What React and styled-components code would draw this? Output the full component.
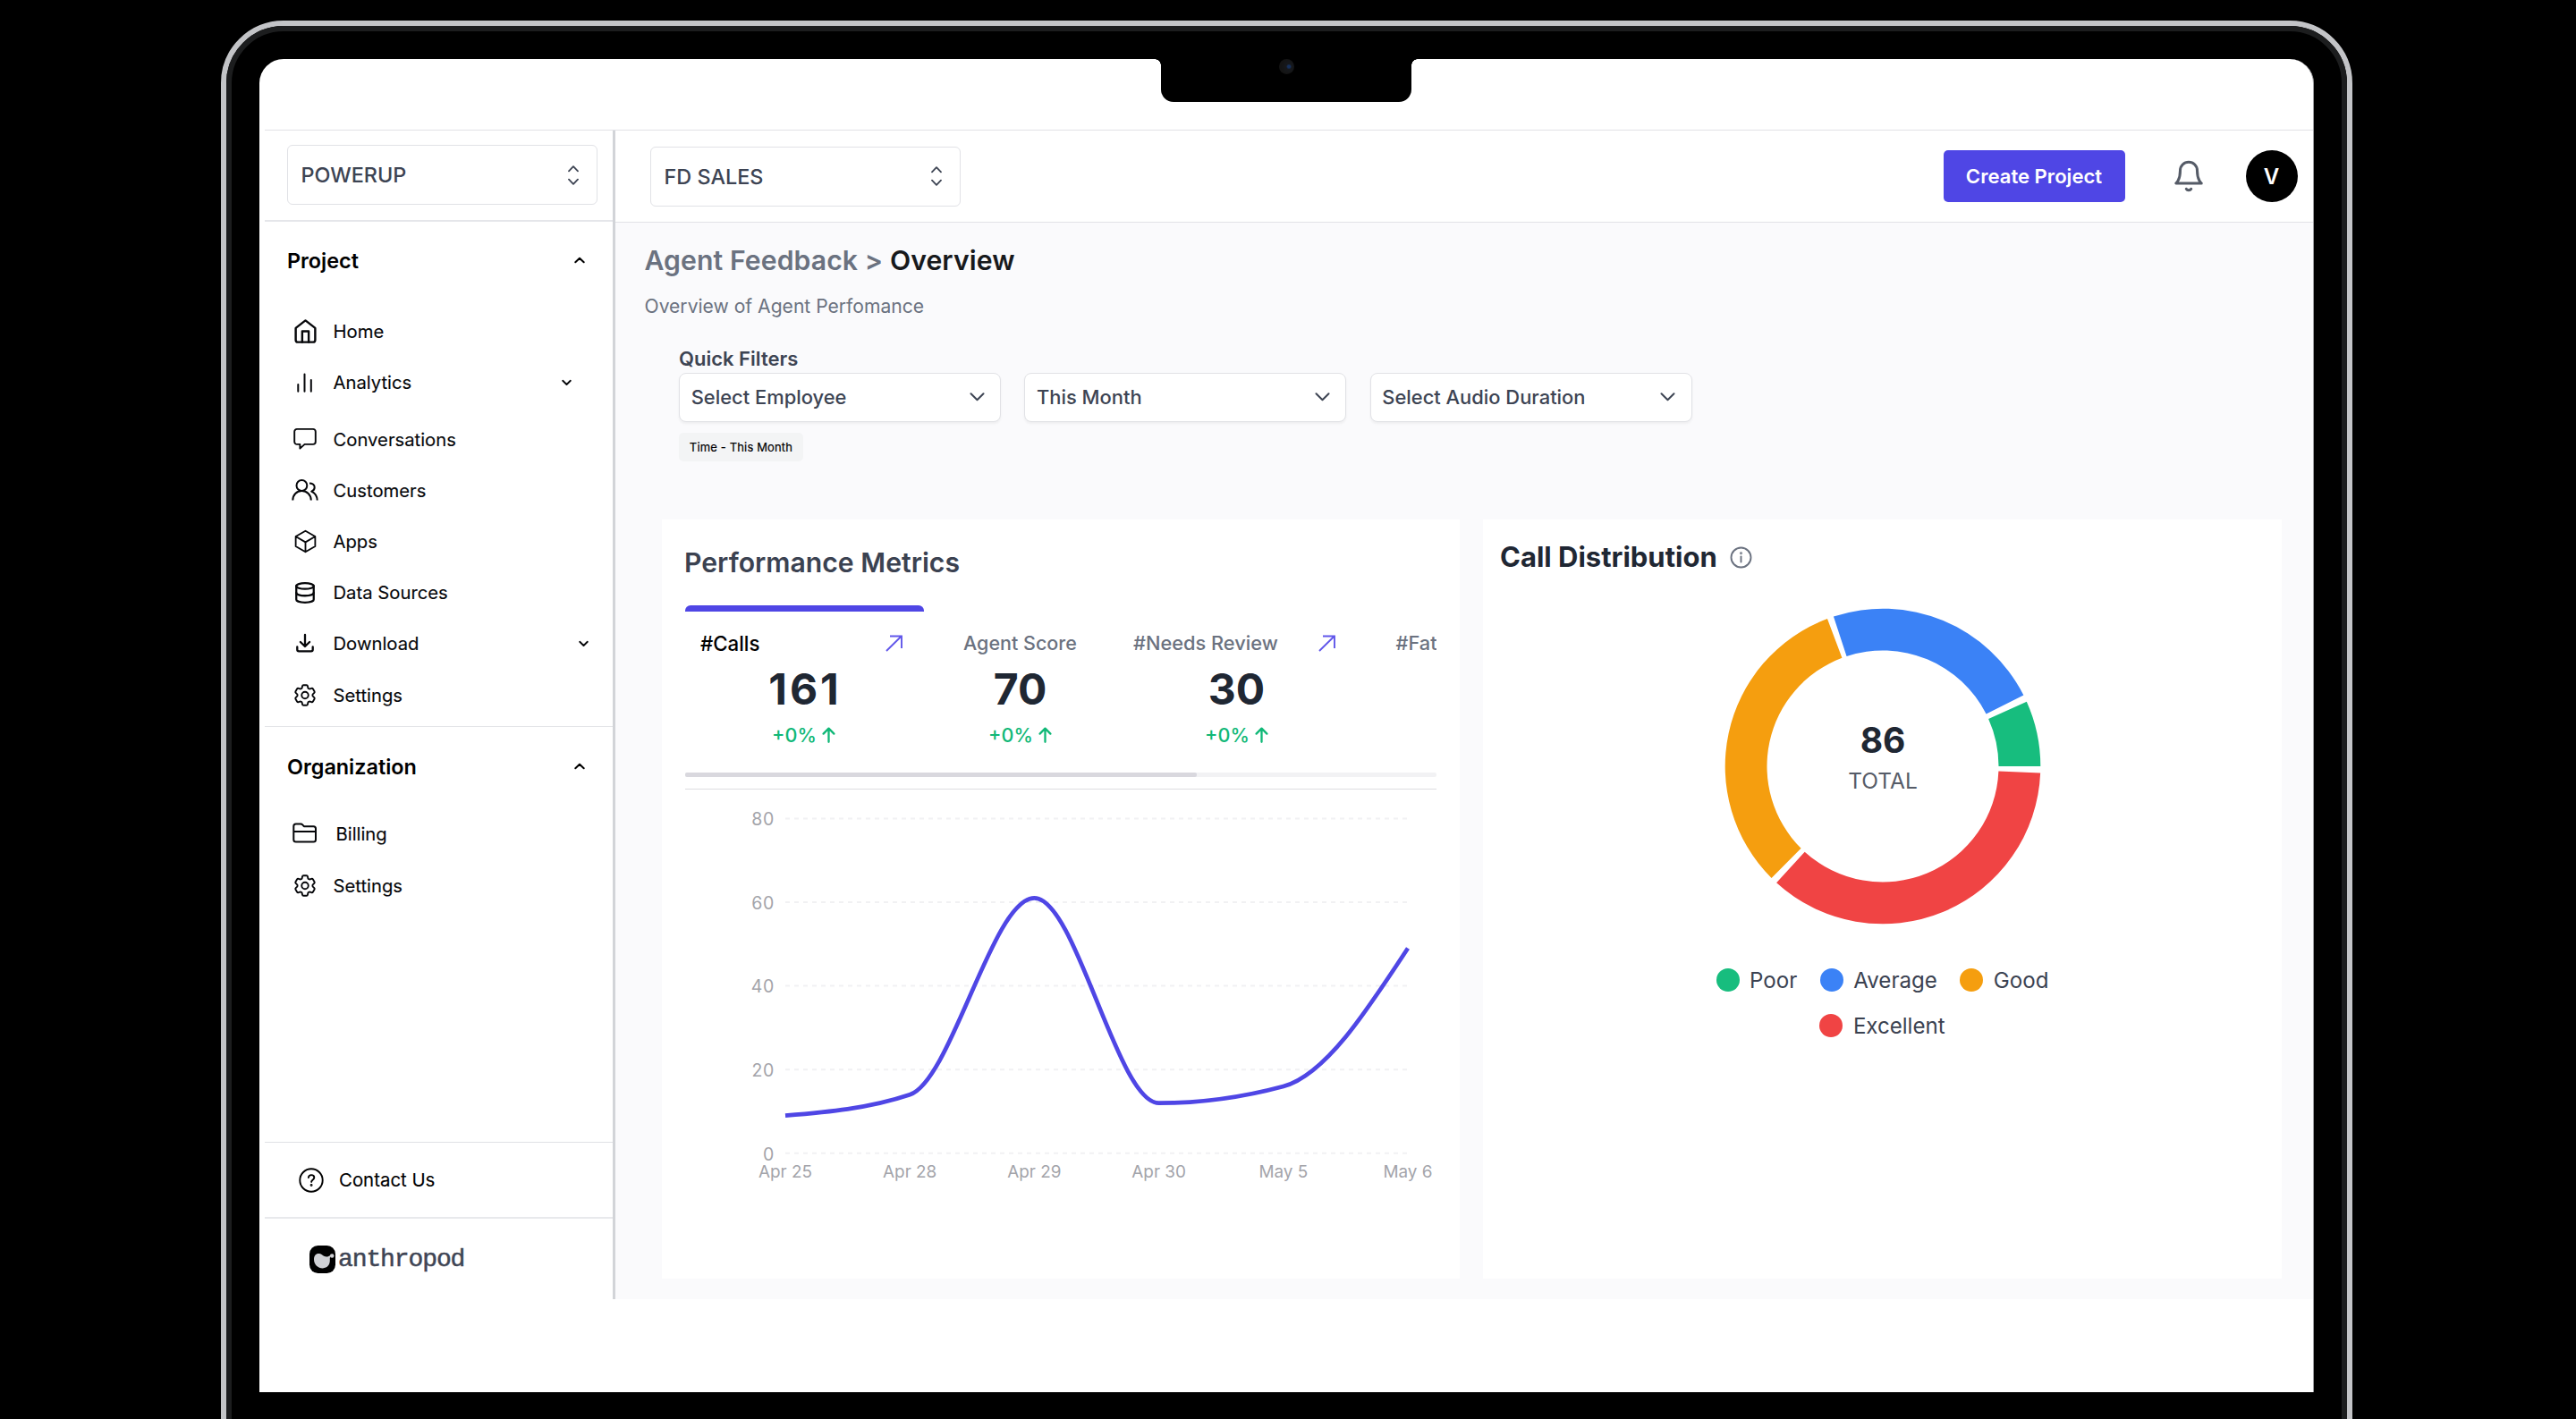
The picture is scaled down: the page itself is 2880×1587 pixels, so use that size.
import React from 'react';
import styled, { createGlobalStyle } from 'styled-components';
import { FiHome, FiBell, FiDatabase } from 'react-icons/fi';
import { HiOutlineCube, HiOutlineCog6Tooth } from 'react-icons/hi2';

const GlobalStyle = createGlobalStyle`
  * { box-sizing: border-box; }
  body { margin: 0; background: #000; }
  button { font: inherit; border: 0; }
`;

const Stage = styled.div`
  width: 2880px;
  height: 1587px;
  padding: 23px 0 0 247px;
  overflow: hidden;
  background: #000;
  font-family: Inter, 'Liberation Sans', sans-serif;
  color: #000;
`;

/* ---------- laptop ---------- */
const Lid = styled.div`
  width: 2383px;
  height: 1700px;
  border: 6px solid #c3c4c7;
  border-radius: 70px;
`;
const Bezel = styled.div`
  height: 100%;
  border: 6px solid #1c1d1e;
  border-radius: 64px;
  padding: 31px;
  background: #000;
`;
const Screen = styled.div`
  position: relative;
  height: 1491px;
  padding: 79px 0 0 6px;
  border-right: 1px solid #9a9a9d;
  border-radius: 27px 27px 0 0;
  background: #fff;
`;
const Notch = styled.div`
  position: absolute;
  top: 0;
  left: 1008px;
  width: 280px;
  height: 48px;
  background: #000;
  border-radius: 0 0 14px 14px;
  display: flex;
  justify-content: center;
  &::before, &::after {
    content: '';
    position: absolute;
    top: 0;
    width: 7px;
    height: 7px;
  }
  &::before { left: -7px; background: radial-gradient(circle at 0 100%, transparent 6.5px, #000 7px); }
  &::after { right: -7px; background: radial-gradient(circle at 100% 100%, transparent 6.5px, #000 7px); }
`;
const Camera = styled.div`
  width: 17px;
  height: 17px;
  border-radius: 50%;
  background: radial-gradient(circle at 65% 50%, #16305c 0 1.5px, #16181c 3px, #141414 9px);
`;

/* ---------- shell ---------- */
const Shell = styled.div`
  display: flex;
  height: 1308px;
  border-top: 1px solid #e1e2e6;
`;
const Sidebar = styled.aside`
  width: 392px;
  flex: none;
  display: flex;
  flex-direction: column;
  border-right: 3px solid #d2d4d8;
`;
const SwitcherArea = styled.div`
  height: 102px;
  padding: 16px 17px 0 25px;
  border-bottom: 2px solid #e5e6ea;
`;
const Switcher = styled.div`
  width: 347px;
  height: 67px;
  padding: 0 20px 0 14.5px;
  display: flex;
  align-items: center;
  justify-content: space-between;
  border: 1px solid #e1e2e6;
  border-radius: 6px;
  background: #fff;
  color: #3d4453;
  font-size: 23.4px;
  font-weight: 500;
`;
const Section = styled.section`
  padding-bottom: 6px;
  border-bottom: ${(p) => (p.$last ? 0 : 1)}px solid #e4e5e8;
`;
const SectionHead = styled.div`
  height: ${(p) => p.$h}px;
  margin-bottom: ${(p) => p.$gap}px;
  padding: 0 31.5px 0 25px;
  display: flex;
  align-items: center;
  justify-content: space-between;
  font-size: 23.4px;
  font-weight: 600;
`;
const NavItem = styled.a`
  height: ${(p) => p.$h || 57.2}px;
  margin-bottom: ${(p) => p.$after || 0}px;
  padding: 0 ${(p) => p.$end || 0}px 0 30px;
  display: flex;
  align-items: center;
  gap: 16.5px;
  font-size: 20.25px;
  color: #06070a;
  -webkit-text-stroke: 0.12px currentColor;
`;
const IconCell = styled.span`
  width: 30px;
  height: 30px;
  flex: none;
  display: flex;
  align-items: center;
  justify-content: center;
`;
const NavLabel = styled.span`
  flex: 1;
  padding-left: ${(p) => p.$indent || 0}px;
`;
const Spacer = styled.div`flex: 1;`;
const ContactRow = styled.div`
  height: 84px;
  padding-left: 37px;
  display: flex;
  align-items: center;
  gap: 16px;
  border-top: 1px solid #e0e1e5;
  font-size: 20.4px;
  -webkit-text-stroke: 0.12px currentColor;
`;
const BrandRow = styled.div`
  height: 92px;
  padding-left: 50px;
  display: flex;
  align-items: center;
  gap: 3px;
  border-top: 2px solid #e8e9ec;
  color: #3f4554;
  font-family: 'Liberation Mono', monospace;
  font-size: 28px;
  letter-spacing: -1.1px;
  -webkit-text-stroke: 0.5px currentColor;
`;

/* ---------- main ---------- */
const Main = styled.main`
  flex: 1;
  display: flex;
  flex-direction: column;
  background: #fafafc;
`;
const TopBar = styled.header`
  height: 103px;
  padding: 0 17.5px 0 39px;
  display: flex;
  align-items: center;
  border-bottom: 1px solid #e1e2e6;
  background: #fff;
`;
const CreateButton = styled.button`
  width: 203px;
  height: 58px;
  margin-left: auto;
  padding: 0;
  border-radius: 5px;
  background: #4f46e5;
  color: #fff;
  font-size: 22.1px;
  font-weight: 600;
`;
const BellSlot = styled.span`
  width: 39px;
  margin: 0 44px 0 52px;
  display: flex;
  color: #555b67;
`;
const Avatar = styled.div`
  width: 58px;
  height: 58px;
  border-radius: 50%;
  background: #000;
  color: #fff;
  display: flex;
  align-items: center;
  justify-content: center;
  font-size: 24px;
  font-weight: 600;
`;
const Content = styled.div`
  padding: 22px 35px 0 32.5px;
`;
const Title = styled.h1`
  margin: 0;
  font-size: 30.2px;
  line-height: 40px;
  letter-spacing: 0.08px;
  font-weight: 600;
  color: #6b7280;
  b { font-weight: 600; color: #17191c; }
`;
const Subtitle = styled.p`
  margin: 17px 0 28px;
  font-size: 21.1px;
  line-height: 30px;
  color: #6b7280;
`;
const Filters = styled.div`
  padding-left: 38.5px;
`;
const FiltersLabel = styled.div`
  font-size: 22px;
  line-height: 30px;
  font-weight: 600;
  color: #3d4453;
`;
const FilterRow = styled.div`
  display: flex;
  gap: 26.3px;
  margin-top: 1px;
`;
const FilterSelect = styled.div`
  width: 360px;
  height: 55px;
  padding: 0 17.5px 1px 12.7px;
  display: flex;
  align-items: center;
  justify-content: space-between;
  border: 1px solid #e1e2e6;
  border-radius: 8px;
  background: #fff;
  box-shadow: 0 2px 3px rgba(0, 0, 0, 0.05);
  font-size: 21.9px;
  font-weight: 500;
  color: #3d4453;
`;
const Chip = styled.span`
  display: flex;
  align-items: center;
  justify-content: center;
  width: 139px;
  height: 32px;
  margin-top: 12px;
  border-radius: 5px;
  background: #f3f4f5;
  font-size: 13px;
  letter-spacing: 0.15px;
  -webkit-text-stroke: 0.2px currentColor;
`;
const Cards = styled.div`
  display: grid;
  grid-template-columns: 891.5px 893px;
  column-gap: 26.5px;
  margin: 65px 0 0 19.5px;
`;
const Card = styled.section`
  height: 849px;
  padding: ${(p) => p.$pad};
  background: #fff;
`;
const CardTitle = styled.h2`
  margin: 0 0 0 ${(p) => p.$nudge || 0}px;
  display: flex;
  align-items: center;
  gap: 14px;
  font-size: ${(p) => p.$size}px;
  font-weight: ${(p) => p.$weight};
  line-height: 40px;
  color: ${(p) => p.$color};
`;

/* ---------- metric tabs ---------- */
const TabStrip = styled.div`
  width: 840px;
  height: 187px;
  margin-top: 28px;
  display: flex;
  overflow: hidden;
`;
const Tab = styled.div`
  width: ${(p) => p.$w}px;
  flex: none;
  display: flex;
  flex-direction: column;
  align-items: center;
`;
const TabMarker = styled.div`
  width: 100%;
  height: 7px;
  margin-bottom: 20px;
  border-radius: 6px 6px 0 0;
  background: ${(p) => (p.$on ? '#4f46e5' : 'transparent')};
`;
const TabHead = styled.div`
  width: 100%;
  height: 30px;
  padding: ${(p) => p.$pad};
  display: flex;
  align-items: center;
  justify-content: space-between;
  white-space: nowrap;
  font-size: ${(p) => p.$size || 21.8}px;
  font-weight: 500;
  color: ${(p) => (p.$on ? '#000' : '#6b7280')};
`;
const TabValue = styled.div`
  margin: 9px ${(p) => -(p.$track || 0) + 2}px 0 0;
  line-height: 56px;
  font-size: 48px;
  font-weight: 700;
  letter-spacing: ${(p) => p.$track || 0}px;
  color: #1f2733;
`;
const Delta = styled.div`
  margin: 8px 2px 0 0;
  display: flex;
  align-items: center;
  gap: 6px;
  line-height: 30px;
  font-size: 21.6px;
  font-weight: 500;
  color: #10b877;
`;
const ScrollTrack = styled.div`
  width: 840px;
  height: 5px;
  border-radius: 2px;
  background: #f2f2f4;
`;
const ScrollThumb = styled.div`
  width: 572px;
  height: 5px;
  border-radius: 2px;
  background: #d9d8de;
`;
const Rule = styled.div`
  width: 840px;
  height: 1px;
  margin-top: 13px;
  background: #dcdde1;
`;
const Plot = styled.svg`display: block;`;
const DonutWrap = styled.div`
  display: flex;
  justify-content: center;
  margin-top: 34px;
`;
const Legend = styled.div`
  width: 420px;
  margin: 42px auto 0;
  display: flex;
  flex-wrap: wrap;
  justify-content: center;
  gap: 17px 25.5px;
`;
const LegendItem = styled.div`
  display: flex;
  align-items: center;
  gap: 11.5px;
  height: 34px;
  font-size: 24.1px;
  color: #3b4251;
  &::before {
    content: '';
    width: 26px;
    height: 26px;
    border-radius: 50%;
    background: ${(p) => p.$color};
  }
`;

/* ---------- icons ---------- */
const Glyph = styled.svg`flex: none;`;
const Stroke = ({ w, h, sw = 2, color = 'currentColor', cap = 'round', children }) => (
  <Glyph width={w} height={h} viewBox={`0 0 ${w} ${h}`} fill="none" stroke={color} strokeWidth={sw} strokeLinecap={cap} strokeLinejoin="round">
    {children}
  </Glyph>
);
const UpDown = () => <Stroke w={12} h={22} sw={1.8}><path d="M1 6.3 6 1.2l5 5.1M1 15.7l5 5.1 5-5.1" /></Stroke>;
const ChevronUp = () => <Stroke w={12} h={8}><path d="M1.3 6.3 6 1.7l4.7 4.6" /></Stroke>;
const ChevronSmall = () => <Stroke w={11} h={8} sw={1.9}><path d="M1.2 1.8 5.5 6l4.3-4.2" /></Stroke>;
const ChevronSelect = () => <Stroke w={17} h={10}><path d="M1.5 1.3l7 7 7-7" /></Stroke>;
const BarsIcon = () => <Stroke w={30} h={30} sw={2}><path d="M7.3 17v7.800M14.500 5.500v19.300M21.800 12v12.800" /></Stroke>;
const ChatIcon = () => (
  <Stroke w={30} h={30} sw={1.9}>
    <path d="M6 3.9h18a2.8 2.8 0 0 1 2.8 2.8v11.4a2.8 2.8 0 0 1-2.8 2.8H14.600L9.400 25.600v-4.700H6a2.800 2.800 0 0 1-2.800-2.800V6.700A2.800 2.800 0 0 1 6 3.900Z" />
  </Stroke>
);
const PeopleIcon = () => (
  <Stroke w={30} h={26} sw={2} cap="butt">
    <circle cx="11.4" cy="8" r="5.9" />
    <path d="M1.300 24.500c0-6 4.400-10.500 10.100-10.500s10.400 4.500 10.400 10.500M20 5.400c3 0 5.700 1.500 5.700 4.500 0 2.400-1.500 4-3.500 4.700 3.800 1.700 6.300 5 6.500 9.900" />
  </Stroke>
);
const DownloadIcon = () => (
  <Stroke w={30} h={30} sw={2.3}>
    <path d="M15 5v12.500M9.900 13l5.100 5 5.100-5M6.300 18.500v3a1.800 1.800 0 0 0 1.800 1.800h13.800a1.800 1.800 0 0 0 1.800-1.800v-3" />
  </Stroke>
);
const FolderIcon = () => (
  <Stroke w={30} h={26} sw={2}>
    <path d="M2.300 20V5a2.500 2.500 0 0 1 2.500-2.500h5.400c.8 0 1.500.3 2 .9l1.600 1.800h10.700A2.500 2.500 0 0 1 27 7.700V20a2.500 2.500 0 0 1-2.500 2.500H4.800A2.500 2.500 0 0 1 2.300 20ZM2.300 11H27" />
  </Stroke>
);
const HelpIcon = () => (
  <Stroke w={30} h={30} sw={1.9}>
    <circle cx="15" cy="15" r="12.7" />
    <path d="M11.900 12c.2-1.800 1.500-2.900 3.200-2.900s3.200 1.100 3.200 2.800c0 2.500-3.100 2.500-3.200 5" />
    <circle cx="15.1" cy="20.5" r=".5" fill="currentColor" />
  </Stroke>
);
const InfoIcon = () => (
  <Stroke w={25} h={25} sw={1.9} color="#6b7280">
    <circle cx="12.5" cy="12.5" r="11" />
    <path d="M12.500 11.500v6" />
    <circle cx="12.5" cy="7.8" r=".5" />
  </Stroke>
);
const OpenIcon = () => <Stroke w={19} h={19} sw={1.9} color="#6157ea" cap="butt"><path d="M1 18 17.800 1.500M5 1.500h13V15" strokeLinejoin="miter" /></Stroke>;
const RiseIcon = () => <Stroke w={15} h={18} sw={2.3}><path d="M7.500 16.800V1.800M1.600 7.600l5.900-6 5.900 6" /></Stroke>;
const LogoMark = () => (
  <svg width="29" height="31" viewBox="0 0 29 31">
    <rect width="29" height="31" rx="9.5" fill="#000" />
    <path d="M5 15.500c0-4.500 2.500-7 6-6.500 3.200.5 4.500 3.500 8 3.500 1.500 0 2.500-.6 3.600-1.300l1 1.400c-.8.800-.9 1.500-.8 3 .4 5.800-2.800 9.800-8 9.800S5 21.500 5 15.500Z" fill="#d0d1d5" />
    <circle cx="25.2" cy="11.5" r="2.3" fill="#d0d1d5" />
  </svg>
);

/* ---------- line chart ---------- */
const CALLS = [
  ['Apr 25', 9], ['Apr 28', 14], ['Apr 29', 61], ['Apr 30', 12], ['May 5', 16], ['May 6', 49],
];
const X0 = 112;
const STEP = 139.2;
const Y0 = 406.8;
const UNIT = 4.68;

function monotonePath(pts) {
  const n = pts.length;
  const slope = (a, b) => (b[1] - a[1]) / (b[0] - a[0]);
  const t = pts.map((p, i) => {
    if (i === 0 || i === n - 1) return 0;
    const s0 = slope(pts[i - 1], p);
    const s1 = slope(p, pts[i + 1]);
    const m = (s0 + s1) / 2;
    return (Math.sign(s0) + Math.sign(s1)) * Math.min(Math.abs(s0), Math.abs(s1), 0.5 * Math.abs(m)) || 0;
  });
  t[0] = (3 * slope(pts[0], pts[1]) - t[1]) / 2;
  t[n - 1] = (3 * slope(pts[n - 2], pts[n - 1]) - t[n - 2]) / 2;
  let d = `M${pts[0][0]},${pts[0][1]}`;
  for (let i = 1; i < n; i += 1) {
    const dx = (pts[i][0] - pts[i - 1][0]) / 3;
    d += `C${pts[i - 1][0] + dx},${pts[i - 1][1] + dx * t[i - 1]} ${pts[i][0] - dx},${pts[i][1] - dx * t[i]} ${pts[i][0]},${pts[i][1]}`;
  }
  return d;
}

function LineChart() {
  const pts = CALLS.map(([, v], i) => [X0 + i * STEP, Y0 - v * UNIT]);
  return (
    <Plot width="866" height="450" viewBox="0 0 866 450">
      {[0, 20, 40, 60, 80].map((v) => (
        <g key={v}>
          <line x1={X0} x2={X0 + 5 * STEP} y1={Y0 - v * UNIT} y2={Y0 - v * UNIT} stroke="#f1f1f3" strokeWidth="2" strokeDasharray="5 5" />
          <text x="100.2" y={Y0 - v * UNIT + 7.8} textAnchor="end" fontSize="19.5" letterSpacing=".8" fill="#a3a4aa">{v}</text>
        </g>
      ))}
      {CALLS.map(([label], i) => (
        <text key={label} x={X0 + i * STEP} y="434" textAnchor="middle" fontSize="18.9" fill="#a3a4aa">{label}</text>
      ))}
      <path d={monotonePath(pts)} fill="none" stroke="#4f46e5" strokeWidth="4.7" />
    </Plot>
  );
}

/* ---------- donut ---------- */
const SLICES = [
  ['#17bd7e', 0, 24.2], ['#3b82f6', 26.8, 108.2], ['#f59e0f', 110.6, 225.1], ['#f04444', 227.6, 357.6],
];
const polar = (r, a) => {
  const k = (a * Math.PI) / 180;
  return `${180 + r * Math.cos(k)} ${180 - r * Math.sin(k)}`;
};
const ring = (a, b) => {
  const big = b - a > 180 ? 1 : 0;
  return `M${polar(176.3, a)}A176.3 176.3 0 ${big} 0 ${polar(176.3, b)}L${polar(129.5, b)}A129.5 129.5 0 ${big} 1 ${polar(129.5, a)}Z`;
};
const Donut = () => (
  <svg width="360" height="360" viewBox="0 0 360 360">
    {SLICES.map(([c, a, b]) => <path key={c} d={ring(a, b)} fill={c} />)}
    <text x="180" y="164.5" textAnchor="middle" fontSize="39" fontWeight="700" fill="#1f2733">86</text>
    <text x="180" y="204.5" textAnchor="middle" fontSize="24.5" fill="#565c68">TOTAL</text>
  </svg>
);

const PROJECT_NAV = [
  { label: 'Home', icon: <FiHome size={29} /> },
  { label: 'Analytics', icon: <BarsIcon />, end: 46.5, after: 6.1 },
  { label: 'Conversations', icon: <ChatIcon /> },
  { label: 'Customers', icon: <PeopleIcon /> },
  { label: 'Apps', icon: <HiOutlineCube size={29} /> },
  { label: 'Data Sources', icon: <FiDatabase size={26} strokeWidth={2.1} /> },
  { label: 'Download', icon: <DownloadIcon />, end: 27.5 },
  { label: 'Settings', icon: <HiOutlineCog6Tooth size={31} /> },
];

const METRICS = [
  { label: '#Calls', value: '161', w: 267, pad: '0 24px 0 17px', open: true, on: true, size: 22.3, track: 3 },
  { label: 'Agent Score', value: '70', w: 217, pad: '0 0 0 44px', size: 21.5 },
  { label: '#Needs Review', value: '30', w: 267, pad: '0 24px 0 17px', open: true },
  { label: '#Fat', value: '', w: 89, pad: '0 0 0 43.500px' },
];

export default function App() {
  return (
    <Stage>
      <GlobalStyle />
      <Lid>
        <Bezel>
          <Screen>
            <Notch><Camera /></Notch>
            <Shell>
              <Sidebar>
                <SwitcherArea><Switcher>POWERUP<UpDown /></Switcher></SwitcherArea>
                <Section>
                  <SectionHead $h={86} $gap={8}>Project<ChevronUp /></SectionHead>
                  {PROJECT_NAV.map((n) => (
                    <NavItem key={n.label} $after={n.after} $end={n.end}>
                      <IconCell>{n.icon}</IconCell>
                      <NavLabel>{n.label}</NavLabel>
                      {n.end && <ChevronSmall />}
                    </NavItem>
                  ))}
                </Section>
                <Section $last>
                  <SectionHead $h={89} $gap={1.5}>Organization<ChevronUp /></SectionHead>
                  <NavItem $h={58}><IconCell><FolderIcon /></IconCell><NavLabel $indent={3}>Billing</NavLabel></NavItem>
                  <NavItem $h={58}><IconCell><HiOutlineCog6Tooth size={31} /></IconCell><NavLabel>Settings</NavLabel></NavItem>
                </Section>
                <Spacer />
                <ContactRow><HelpIcon />Contact Us</ContactRow>
                <BrandRow><LogoMark />anthropod</BrandRow>
              </Sidebar>
              <Main>
                <TopBar>
                  <Switcher>FD SALES<UpDown /></Switcher>
                  <CreateButton>Create Project</CreateButton>
                  <BellSlot><FiBell size={38} strokeWidth={1.9} /></BellSlot>
                  <Avatar>V</Avatar>
                </TopBar>
                <Content>
                  <Title>Agent Feedback &gt; <b>Overview</b></Title>
                  <Subtitle>Overview of Agent Perfomance</Subtitle>
                  <Filters>
                    <FiltersLabel>Quick Filters</FiltersLabel>
                    <FilterRow>
                      <FilterSelect>Select Employee<ChevronSelect /></FilterSelect>
                      <FilterSelect>This Month<ChevronSelect /></FilterSelect>
                      <FilterSelect>Select Audio Duration<ChevronSelect /></FilterSelect>
                    </FilterRow>
                    <Chip>Time - This Month</Chip>
                  </Filters>
                  <Cards>
                    <Card $pad="28px 0 0 26px">
                      <CardTitle $size={30.2} $weight={600} $color="#3b4251" $nudge={-1}>Performance Metrics</CardTitle>
                      <TabStrip>
                        {METRICS.map((m) => (
                          <Tab key={m.label} $w={m.w}>
                            <TabMarker $on={m.on} />
                            <TabHead $on={m.on} $pad={m.pad} $size={m.size}>{m.label}{m.open && <OpenIcon />}</TabHead>
                            {m.value && <TabValue $track={m.track}>{m.value}</TabValue>}
                            {m.value && <Delta>+0%<RiseIcon /></Delta>}
                          </Tab>
                        ))}
                      </TabStrip>
                      <ScrollTrack><ScrollThumb /></ScrollTrack>
                      <Rule />
                      <LineChart />
                    </Card>
                    <Card $pad="22px 19px 0">
                      <CardTitle $size={31} $weight={700} $color="#1f2733">Call Distribution<InfoIcon /></CardTitle>
                      <DonutWrap><Donut /></DonutWrap>
                      <Legend>
                        <LegendItem $color="#17bd7e">Poor</LegendItem>
                        <LegendItem $color="#3b82f6">Average</LegendItem>
                        <LegendItem $color="#f59e0f">Good</LegendItem>
                        <LegendItem $color="#f04444">Excellent</LegendItem>
                      </Legend>
                    </Card>
                  </Cards>
                </Content>
              </Main>
            </Shell>
          </Screen>
        </Bezel>
      </Lid>
    </Stage>
  );
}
